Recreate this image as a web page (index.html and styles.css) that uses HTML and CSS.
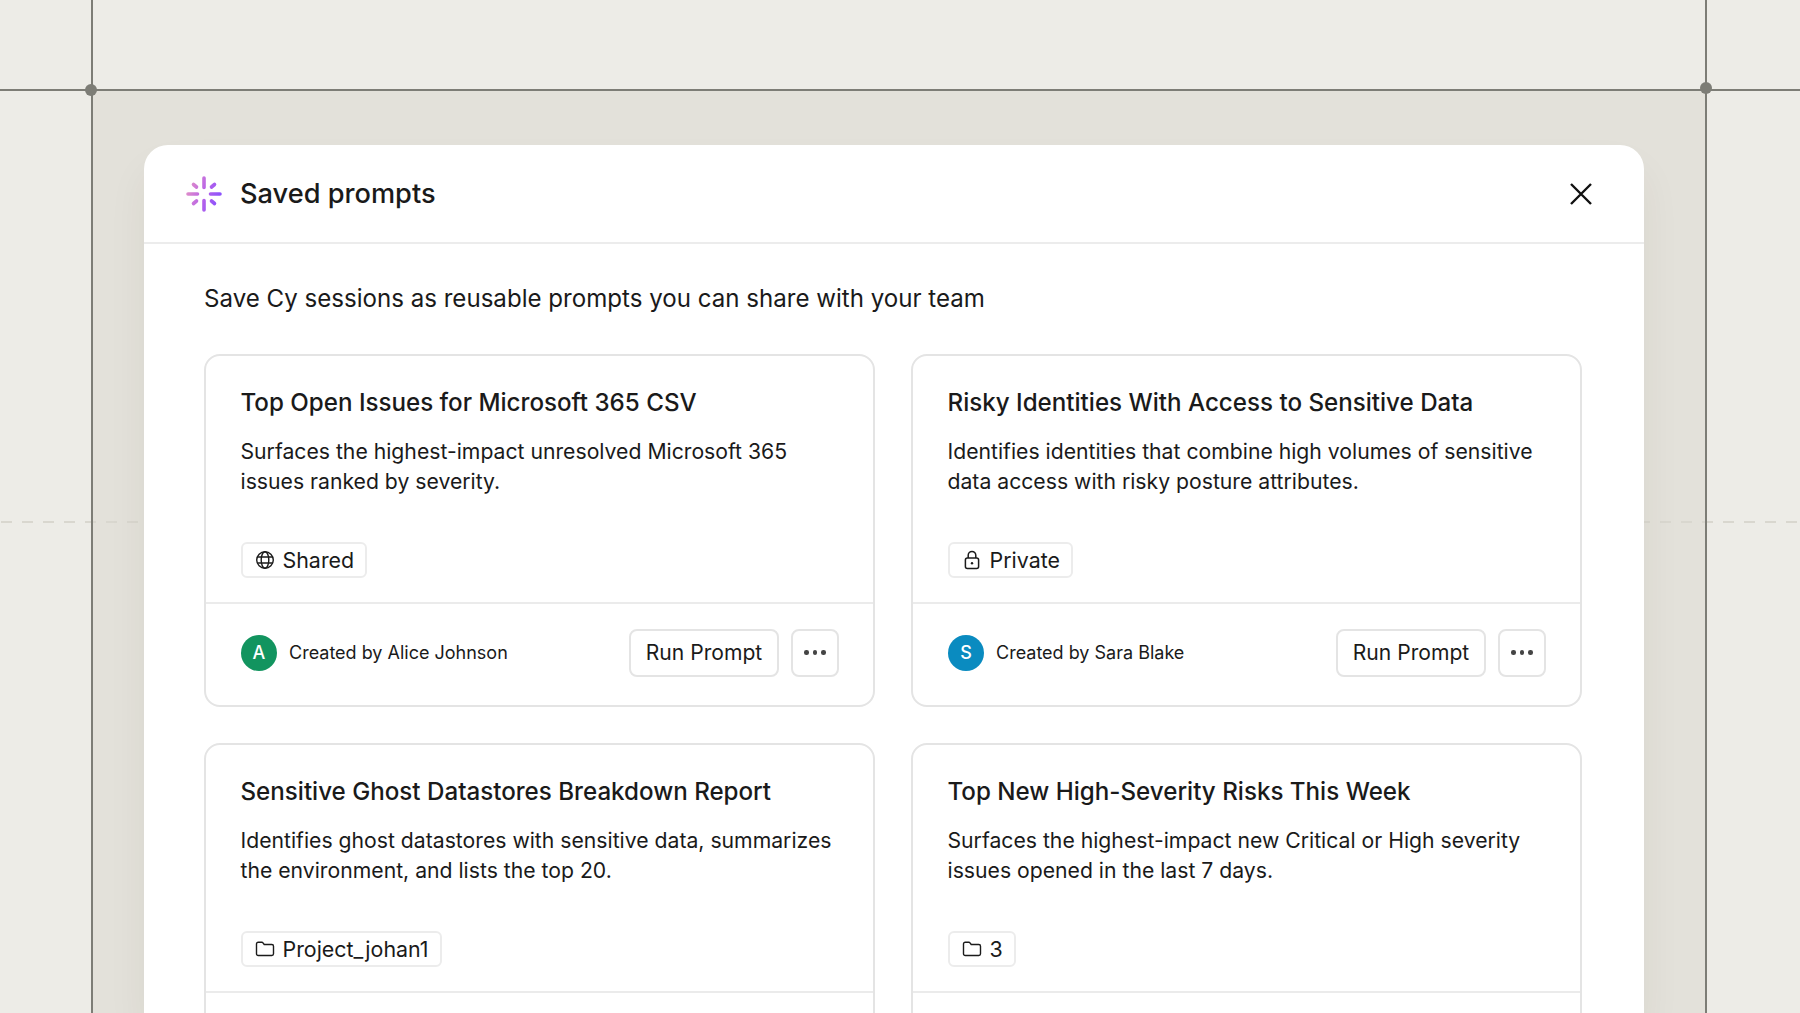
FILE: index.html
```html
<!DOCTYPE html>
<html lang="en">
<head>
    <meta charset="UTF-8">
    <meta name="viewport" content="width=device-width, initial-scale=1.0">
    <title>Saved prompts</title>
    <link rel="stylesheet" href="styles.css">
</head>
<body>

    <!-- Frame guide lines drawn over the backdrop -->
    <div class="guide guide-top"></div>
    <div class="guide guide-left"></div>
    <div class="guide guide-right"></div>
    <div class="guide-dash"></div>
    <div class="guide-dot dot-left"></div>
    <div class="guide-dot dot-right"></div>

    <div class="stage">
        <div class="modal">
            <header class="modal-head">
                <svg class="logo" viewBox="-18 -18 36 36" fill="none" stroke="url(#spark)" stroke-width="3.6" stroke-linecap="round">
                    <defs>
                        <linearGradient id="spark" gradientUnits="userSpaceOnUse" x1="-17" y1="-6" x2="17" y2="6">
                            <stop offset="0" stop-color="#e08fc8"/>
                            <stop offset="0.5" stop-color="#b963e8"/>
                            <stop offset="1" stop-color="#8650ff"/>
                        </linearGradient>
                    </defs>
                    <path d="M0 -16V-6.5M0 6.5V16M-16 0H-6.5M6.5 0H16M-10.5 -9.5L-7.5 -7M10.5 -9.5L7.5 -7M-10.5 9.5L-7.5 7M10.5 9.5L7.5 7"/>
                </svg>
                <h1 class="modal-title">Saved prompts</h1>
                <svg class="close" viewBox="0 0 22 22" fill="none" stroke="#111" stroke-width="2.4">
                    <path d="M1 1L21 21M21 1L1 21"/>
                </svg>
            </header>

            <div class="modal-body">
                <p class="intro">Save Cy sessions as reusable prompts you can share with your team</p>

                <div class="grid">
                    <div class="card">
                        <div class="card-main">
                            <h2>Top Open Issues for Microsoft 365 CSV</h2>
                            <p>Surfaces the highest-impact unresolved Microsoft 365 issues ranked by severity.</p>
                            <span class="tag">
                                <svg class="tag-icon" viewBox="0 0 20 20" fill="none" stroke="#1b1b1b" stroke-width="1.4">
                                    <circle cx="10" cy="10" r="8.3"/>
                                    <ellipse cx="10" cy="10" rx="3.8" ry="8.3"/>
                                    <path d="M2.3 7H17.7M2.3 13H17.7"/>
                                </svg>
                                Shared
                            </span>
                        </div>
                        <div class="card-foot">
                            <span class="avatar green">A</span>
                            <span class="author">Created by Alice Johnson</span>
                            <button class="run">Run Prompt</button>
                            <button class="more"><i></i><i></i><i></i></button>
                        </div>
                    </div>

                    <div class="card">
                        <div class="card-main">
                            <h2>Risky Identities With Access to Sensitive Data</h2>
                            <p>Identifies identities that combine high volumes of sensitive data access with risky posture attributes.</p>
                            <span class="tag">
                                <svg class="tag-icon" viewBox="0 0 20 20" fill="none" stroke="#1b1b1b" stroke-width="1.5">
                                    <rect x="3.4" y="8" width="13.2" height="10.6" rx="2"/>
                                    <path d="M6.2 8V5.2a3.8 3.8 0 0 1 7.6 0V8"/>
                                    <circle cx="10" cy="13.3" r="1.2" fill="#1b1b1b" stroke="none"/>
                                </svg>
                                Private
                            </span>
                        </div>
                        <div class="card-foot">
                            <span class="avatar blue">S</span>
                            <span class="author">Created by Sara Blake</span>
                            <button class="run">Run Prompt</button>
                            <button class="more"><i></i><i></i><i></i></button>
                        </div>
                    </div>

                    <div class="card">
                        <div class="card-main">
                            <h2>Sensitive Ghost Datastores Breakdown Report</h2>
                            <p>Identifies ghost datastores with sensitive data, summarizes the environment, and lists the top 20.</p>
                            <span class="tag">
                                <svg class="tag-icon" viewBox="0 0 20 20" fill="none" stroke="#1b1b1b" stroke-width="1.4">
                                    <path d="M1.5 5a1.7 1.7 0 0 1 1.7-1.7h3.6c.6 0 1 .3 1.4.8l1 1.4h7.6a1.7 1.7 0 0 1 1.7 1.7v7.6a1.7 1.7 0 0 1-1.7 1.7H3.2a1.7 1.7 0 0 1-1.7-1.7z"/>
                                </svg>
                                Project_johan1
                            </span>
                        </div>
                        <div class="card-foot"></div>
                    </div>

                    <div class="card">
                        <div class="card-main">
                            <h2>Top New High-Severity Risks This Week</h2>
                            <p>Surfaces the highest-impact new Critical or High severity issues opened in the last 7 days.</p>
                            <span class="tag">
                                <svg class="tag-icon" viewBox="0 0 20 20" fill="none" stroke="#1b1b1b" stroke-width="1.4">
                                    <path d="M1.5 5a1.7 1.7 0 0 1 1.7-1.7h3.6c.6 0 1 .3 1.4.8l1 1.4h7.6a1.7 1.7 0 0 1 1.7 1.7v7.6a1.7 1.7 0 0 1-1.7 1.7H3.2a1.7 1.7 0 0 1-1.7-1.7z"/>
                                </svg>
                                3
                            </span>
                        </div>
                        <div class="card-foot"></div>
                    </div>
                </div>
            </div>
        </div>
    </div>

</body>
</html>
```

FILE: styles.css
```css
html, body {
    height: 1013px;
    overflow: hidden;
}
body {
    font-family: Inter, "Liberation Sans", sans-serif;
    margin: 0;
    background-color: #edece7;
    color: #1a1a1a;
}

.guide {
    position: absolute;
    background-color: #7d7d76;
    z-index: 2;
}
.guide-top {
    left: 0;
    right: 0;
    top: 89px;
    height: 2px;
}
.guide-left {
    left: 91px;
    top: 0;
    bottom: 0;
    width: 2px;
}
.guide-right {
    left: 1705px;
    top: 0;
    bottom: 0;
    width: 2px;
}
.guide-dash {
    position: absolute;
    left: 1px;
    right: 0;
    top: 521px;
    height: 2px;
    background: repeating-linear-gradient(90deg, #d9d7cf 0, #d9d7cf 11px, transparent 11px, transparent 21px);
    z-index: 1;
}
.guide-dot {
    position: absolute;
    width: 12px;
    height: 12px;
    border-radius: 50%;
    background-color: #7d7d76;
    z-index: 3;
}
.dot-left {
    left: 85px;
    top: 84px;
}
.dot-right {
    left: 1700px;
    top: 82px;
}

.stage {
    position: absolute;
    left: 93px;
    top: 91px;
    width: 1612px;
    height: 922px;
    box-sizing: border-box;
    padding: 54px 61px 0 51px;
    background-color: #e3e1da;
}
.modal {
    position: relative;
    z-index: 2;
    background-color: white;
    border-radius: 24px 24px 0 0;
    box-shadow: 0 24px 40px rgba(60, 55, 40, 0.06);
    height: 868px;
    overflow: hidden;
}
.modal-head {
    display: flex;
    align-items: center;
    height: 97px;
    padding: 0 52px 0 42px;
    border-bottom: 2px solid #ececec;
}
.logo {
    width: 36px;
    height: 36px;
    margin-right: 18px;
}
.modal-title {
    flex: 1;
    margin: 0;
    font-size: 27.2px;
    font-weight: 450;
}
.close {
    width: 22px;
    height: 22px;
}

.modal-body {
    padding: 37px 50px 0 60px;
}
.intro {
    margin: 0 0 37px;
    font-size: 24.1px;
    line-height: 36px;
}
.grid {
    display: grid;
    grid-template-columns: 671px 671px;
    column-gap: 36px;
    row-gap: 36px;
}
.card {
    border: 2px solid #e4e4e4;
    border-radius: 16px;
    height: 353px;
    box-sizing: border-box;
}
.card-main {
    height: 248px;
    box-sizing: border-box;
    padding: 30px 34.5px 0;
    border-bottom: 2px solid #ebebeb;
}
.card h2 {
    margin: 0 0 16px;
    font-size: 24.15px;
    line-height: 34px;
    font-weight: 450;
}
.card p {
    margin: 0 0 46px;
    font-size: 21.2px;
    line-height: 30px;
    height: 60px;
}
.tag {
    display: inline-flex;
    align-items: center;
    gap: 8px;
    height: 36px;
    box-sizing: border-box;
    padding: 0 11px 0 12px;
    border: 2px solid #ececec;
    border-radius: 6px;
    font-size: 21.4px;
}
.tag-icon {
    width: 20px;
    height: 20px;
}
.card-foot {
    display: flex;
    align-items: center;
    height: 101px;
    box-sizing: border-box;
    padding: 0 34px 4px 35px;
}
.avatar {
    display: flex;
    align-items: center;
    justify-content: center;
    width: 36px;
    height: 36px;
    border-radius: 50%;
    color: white;
    font-size: 18px;
    font-weight: 450;
    margin-right: 12px;
}
.green {
    background-color: #12945f;
}
.blue {
    background-color: #0a8bc0;
}
.author {
    flex: 1;
    font-size: 18px;
}
.run, .more {
    height: 48px;
    box-sizing: border-box;
    background-color: white;
    border: 2px solid #e4e4e4;
    border-radius: 8px;
    font-family: inherit;
    color: #1a1a1a;
}
.run {
    width: 150px;
    font-size: 21.1px;
    margin-right: 12px;
}
.more {
    display: flex;
    align-items: center;
    justify-content: center;
    gap: 4px;
    width: 48px;
    padding: 0;
}
.more i {
    width: 4.5px;
    height: 4.5px;
    border-radius: 50%;
    background-color: #444;
}
```
